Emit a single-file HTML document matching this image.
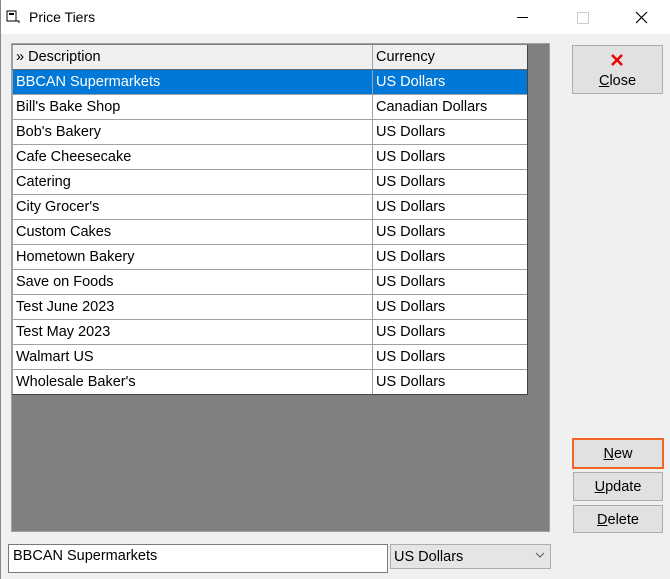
<!DOCTYPE html>
<html><head><style>
body{margin:0;width:670px;height:579px;background:#f0f0f0;font-family:"Liberation Sans",sans-serif;font-size:13.3px;position:relative;overflow:hidden}
.a{position:absolute}
.tb{left:0;top:0;width:670px;height:34px;background:#fff}
.grid{left:11px;top:43px;width:539px;height:489px;background:#808080;border:1px solid #a0a0a0;box-sizing:border-box}
table{position:absolute;left:12px;top:45px;border-collapse:collapse;width:516px;font-size:14.5px}
td{height:23px;padding:1px 0 0 3px;border:1px solid #a0a0a0;background:#fff;white-space:nowrap;line-height:23px;color:#000}
td:first-child{width:356px}
tr.h td{background:#f0f0f0;border-top:none;border-bottom:1px solid #666}
tr.s td{background:#0078d7;color:#fff}
.btn{background:#e1e1e1;border:1px solid #adadad;box-sizing:border-box;text-align:center;font-size:14.5px}
</style></head><body>
<div class="a tb"></div>
<div class="a" style="left:0;top:0;width:1px;height:579px;background:#888"></div>
<svg class="a" style="left:6px;top:10px" width="14" height="14"><rect x="1" y="1" width="9" height="10" fill="none" stroke="#000"/><rect x="3" y="3" width="5" height="2" fill="#000"/><path d="M10 11h3v2" stroke="#000" fill="none"/></svg>
<div class="a" style="left:29px;top:9px;font-size:14px">Price Tiers</div>
<div class="a" style="left:517px;top:17px;width:11px;height:1px;background:#000"></div>
<div class="a" style="left:577px;top:12px;width:10px;height:10px;border:1px solid #ccc"></div>
<svg class="a" style="left:635px;top:11px" width="13" height="13"><path d="M1 1L12 12M12 1L1 12" stroke="#000" stroke-width="1.2"/></svg>
<div class="a grid"></div>
<table>
<tr class="h"><td>» Description</td><td>Currency</td></tr>
<tr class="s"><td>BBCAN Supermarkets</td><td>US Dollars</td></tr>
<tr><td>Bill's Bake Shop</td><td>Canadian Dollars</td></tr>
<tr><td>Bob's Bakery</td><td>US Dollars</td></tr>
<tr><td>Cafe Cheesecake</td><td>US Dollars</td></tr>
<tr><td>Catering</td><td>US Dollars</td></tr>
<tr><td>City Grocer's</td><td>US Dollars</td></tr>
<tr><td>Custom Cakes</td><td>US Dollars</td></tr>
<tr><td>Hometown Bakery</td><td>US Dollars</td></tr>
<tr><td>Save on Foods</td><td>US Dollars</td></tr>
<tr><td>Test June 2023</td><td>US Dollars</td></tr>
<tr><td>Test May 2023</td><td>US Dollars</td></tr>
<tr><td>Walmart US</td><td>US Dollars</td></tr>
<tr><td style="border-bottom:1px solid #444">Wholesale Baker's</td><td style="border-bottom:1px solid #444">US Dollars</td></tr>
</table>
<div class="a" style="left:527px;top:45px;width:1px;height:349px;background:#444"></div>
<div class="a btn" style="left:572px;top:45px;width:91px;height:49px"></div>
<svg class="a" style="left:610px;top:53px" width="14" height="14"><path d="M2 2L12 12M12 2L2 12" stroke="#e00" stroke-width="2.5"/></svg>
<div class="a" style="left:572px;top:73px;width:91px;text-align:center;font-size:14.5px"><u>C</u>lose</div>
<div class="a btn" style="left:572px;top:438px;width:92px;height:31px;border:2px solid #f26522;line-height:29px"><u>N</u>ew</div>
<div class="a btn" style="left:573px;top:472px;width:90px;height:29px;line-height:28px"><u>U</u>pdate</div>
<div class="a btn" style="left:573px;top:505px;width:90px;height:28px;line-height:28px"><u>D</u>elete</div>
<div class="a" style="left:8px;top:544px;width:380px;height:29px;background:#fff;border:1px solid #7a7a7a;box-sizing:border-box;padding:3px 4px;font-size:14.5px">BBCAN Supermarkets</div>
<div class="a" style="left:390px;top:544px;width:161px;height:25px;background:#e5e5e5;border:1px solid #adadad;box-sizing:border-box;padding:4px 3px;font-size:14.5px">US Dollars</div>
<svg class="a" style="left:535px;top:552px" width="10" height="6"><path d="M1 1L5 5L9 1" stroke="#555" fill="none"/></svg>
</body></html>
